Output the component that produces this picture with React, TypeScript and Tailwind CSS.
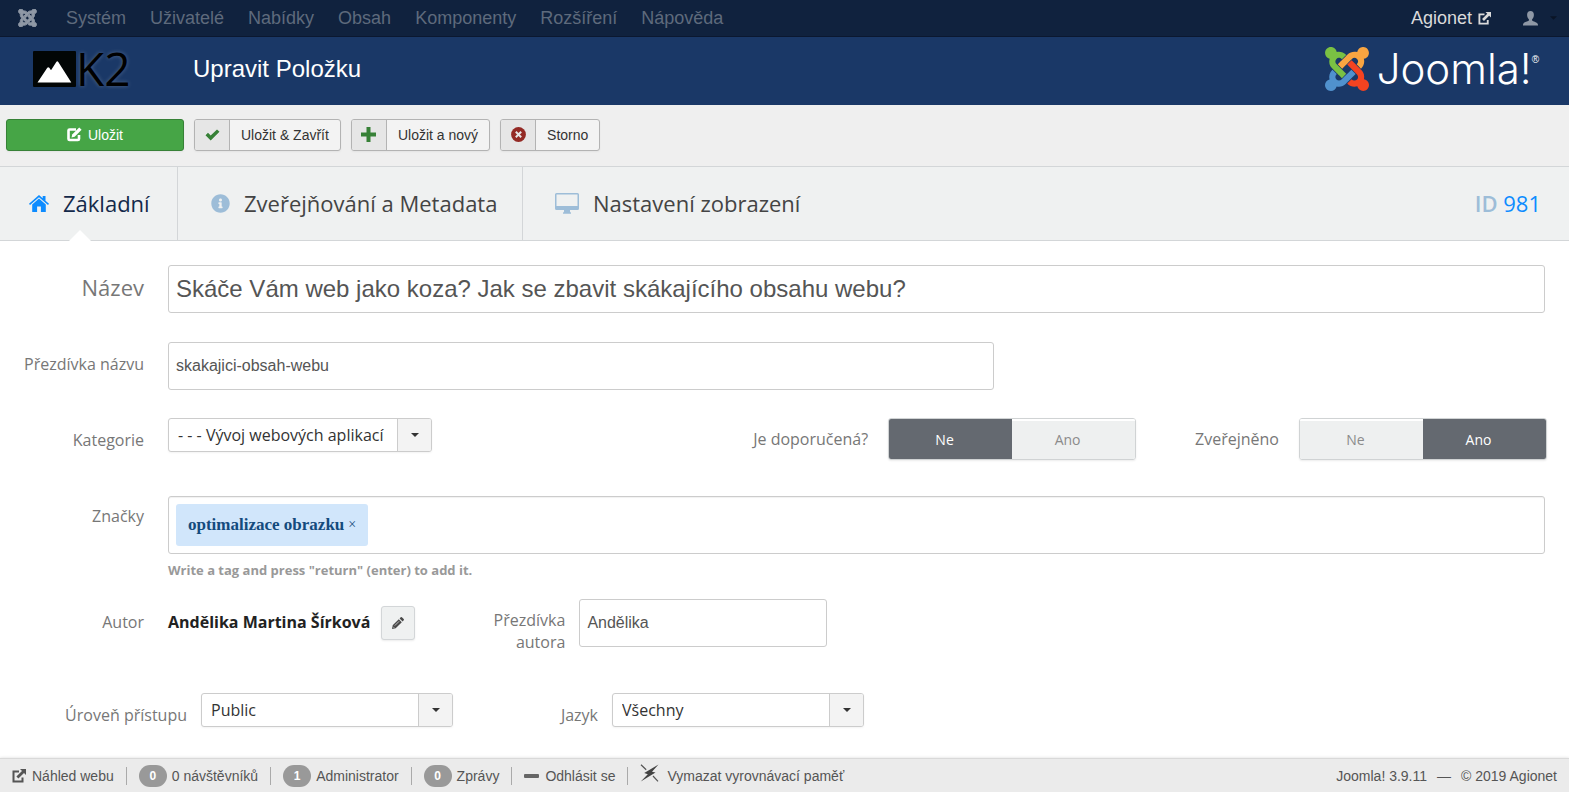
import { useState, type ReactNode } from "react";
import { FaInfoCircle } from "react-icons/fa";

const menuItems = ["Systém", "Uživatelé", "Nabídky", "Obsah", "Komponenty", "Rozšíření", "Nápověda"];

const JOOMLA_ARMS = [
  {
    color: "#7ac143",
    d: "M.6 92.1C.6 58.8 27.4 32 60.4 32c30 0 54.5 21.9 59.2 50.2 32.6-7.6 67.1.6 96.5 30l-44.3 44.3c-20.5-20.5-42.6-16.3-55.4-3.5-14.3 14.3-14.3 37.9 0 52.2l99.5 99.5-44 44.3c-87.7-87.2-49.7-49.7-99.8-99.7-26.8-26.5-35-64.8-24.8-98.9C20.4 144.6.6 120.7.6 92.1z",
  },
  {
    color: "#f9a541",
    d: "M130.1 208.5l44.3 44.3c10-10 89.7-89.7 99.7-99.8 14.3-14.3 37.6-14.3 51.9 0 12.8 12.8 17 35-3.5 55.4l44 44.3c31.2-31.2 38.5-67.6 28.9-101.2 29.2-4.1 51.9-29.2 51.9-59.5 0-33.2-26.8-60.1-59.8-60.1-30.3 0-55.4 22.5-59.5 51.6-33.8-9.9-71.7-1.5-98.3 25.1-18.3 19.1-71.1 71.5-99.6 99.9z",
  },
  {
    color: "#f44321",
    d: "M396.4 360.7c8.2-32.7-.9-68.5-26.3-93.9-11.8-12.2 5 4.7-99.5-99.7l-44.3 44.3 99.7 99.7c14.3 14.3 14.3 37.6 0 51.9-12.8 12.8-35 17-55.4-3.5l-44 44.3c27.6 30.2 68 38.8 102.7 28 5.5 27.4 29.7 48.1 58.9 48.1 33 0 59.8-26.8 59.8-60.1 0-30.2-22.5-55-51.6-59.1z",
  },
  {
    color: "#5091cd",
    d: "M312.1 307.6l-44-44.3c-87 86.4-50.4 50.4-99.7 99.8-14.3 14.3-37.6 14.3-51.9 0-13.1-13.4-16.9-35.3 3.2-55.4l-44-44.3c-30.2 30.2-38 65.2-29.5 98.3-26.7 6-46.2 29.9-46.2 58.2C0 453.2 26.8 480 59.8 480c28.6 0 52.5-19.8 58.6-46.7 32.7 8.2 68.5-.6 94.2-26 32.1-32 12.2-12.4 99.5-99.7z",
  },
];

function JoomlaMark({ className, mono }: { className: string; mono?: boolean }) {
  return (
    <svg className={className} viewBox="0 32 448 448" aria-hidden="true">
      {JOOMLA_ARMS.map((arm) => (
        <path
          key={arm.color}
          d={arm.d}
          fill={mono ? "currentColor" : arm.color}
          stroke={mono ? "currentColor" : "none"}
          strokeWidth={mono ? 24 : 0}
        />
      ))}
    </svg>
  );
}

function ExternalIcon({ className }: { className: string }) {
  return (
    <svg className={className} viewBox="0 0 14 14" aria-hidden="true">
      <path d="M7 2.5H1.5v10h9V8.5" fill="none" stroke="currentColor" strokeWidth="2" />
      <path d="M8 0h6v6l-2-2-5.6 5.6-2-2L10 2z" fill="currentColor" />
    </svg>
  );
}

function EditIcon() {
  return (
    <svg className="size-[15px]" viewBox="0 0 15 15" aria-hidden="true">
      <path d="M9 2.500H2.600Q1.500 2.500 1.500 3.600v8.300Q1.500 13 2.600 13h8.300q1.100 0 1.100-1.100V8" fill="none" stroke="currentColor" strokeWidth="2.600" />
      <path d="M4.500 10.600l.7-3.200 7-7 2.400 2.400-7 7z" fill="currentColor" />
    </svg>
  );
}

function CheckIcon() {
  return (
    <svg className="h-3 w-[15px]" viewBox="0 0 15 12" aria-hidden="true">
      <path d="M.5 6.2L3 3.800l2.700 2.700L12 .4l2.500 2.400L5.700 11.600z" fill="#378137" />
    </svg>
  );
}

function PlusIcon() {
  return (
    <svg className="size-[15px]" viewBox="0 0 15 15" aria-hidden="true">
      <path d="M5.500 0h4v5.500H15v4H9.500V15h-4V9.500H0v-4h5.500z" fill="#378137" />
    </svg>
  );
}

function CancelIcon() {
  return (
    <svg className="size-[15px]" viewBox="0 0 15 15" aria-hidden="true">
      <circle cx="7.5" cy="7.5" r="7.4" fill="#942a25" />
      <path d="M4.800 4.800l5.400 5.400M10.200 4.800l-5.400 5.400" stroke="#e6e6e6" strokeWidth="2" />
    </svg>
  );
}

function HomeIcon() {
  return (
    <svg className="h-[17px] w-5" viewBox="0 0 20 17" aria-hidden="true">
      <path d="M10 0l3.700 3.200V1h2.800v4.700L20 8.800l-1 1.200-9-7.800L1 10 0 8.800z" fill="#0d8cff" />
      <path d="M10 3.500l6.800 5.900V17h-4.900v-5.400H8.100V17H3.200V9.400z" fill="#0d8cff" />
    </svg>
  );
}

function DesktopIcon() {
  return (
    <svg className="h-[21px] w-6" viewBox="0 0 24 21" aria-hidden="true">
      <path
        fillRule="evenodd"
        d="M1.500 0h21Q24 0 24 1.500v14q0 1.500-1.500 1.500H15v1.500q0 .8 1 1v1.200H8v-1.200q1-.2 1-1V17H1.500Q0 17 0 15.500v-14Q0 0 1.500 0zM1.500 1.500v11.500h21V1.500z"
        fill="#9dbdd8"
      />
    </svg>
  );
}

function PencilIcon() {
  return (
    <svg className="size-3" viewBox="0 0 12 12" aria-hidden="true">
      <path d="M0 12l.7-3.700L6.800 2.200l3 3-6.100 6.100zM7.600 1.400L8.700.3q.6-.5 1.200 0l1.800 1.800q.5.6 0 1.200l-1.100 1.100z" fill="#4a4a4a" />
      <path d="M2.800 8.600l4.300-4.300M1.200 9.800l1 1" stroke="#efefef" strokeWidth=".7" />
    </svg>
  );
}

function UserIcon() {
  return (
    <svg className="size-[15px]" viewBox="0 0 15 15" aria-hidden="true">
      <path
        d="M7.500 0c2.200 0 3.400 1.600 3.400 3.800 0 1.900-.8 3.600-1.800 4.500v1.200c.5 1 5.700 1.300 5.900 4.300v.7H0v-.7c.2-3 5.400-3.300 5.900-4.300V8.300c-1-.9-1.800-2.600-1.800-4.500C4.100 1.600 5.300 0 7.500 0z"
        fill="currentColor"
      />
    </svg>
  );
}

function BoltIcon() {
  return (
    <svg className="mb-1.5 h-[18px] w-[19px]" viewBox="0 0 19 18" aria-hidden="true">
      <path d="M18.500.5L12 7.800l3.500.8L.8 17.500l7-7.300-3.600-1.100z" fill="#444" />
      <path d="M1 .8l5.200 5M13 12l5 5.300" stroke="#555" strokeWidth="1.200" />
    </svg>
  );
}

function Caret({ className }: { className: string }) {
  return (
    <svg className={className} viewBox="0 0 8 4" aria-hidden="true">
      <path d="M0 0h8L4 4z" fill="currentColor" />
    </svg>
  );
}

function ToolbarButton({ icon, label }: { icon: ReactNode; label: string }) {
  return (
    <button
      type="button"
      className="flex h-8 items-stretch overflow-hidden rounded-[3px] border border-[#b3b3b3] bg-[#f3f3f3] text-sm text-[#333] shadow-[0_1px_2px_rgba(0,0,0,0.05)]"
    >
      <span className="flex w-[35px] items-center justify-center border-r border-[#b3b3b3] bg-[#e6e6e6]">{icon}</span>
      <span className="self-center px-[11px]">{label}</span>
    </button>
  );
}

function SelectBox({ id, value, className }: { id: string; value: string; className: string }) {
  return (
    <div className={`relative ${className}`}>
      <select
        id={id}
        defaultValue={value}
        className="h-[34px] w-full appearance-none rounded-[3px] border border-[#ccc] bg-white pr-9 pl-[9px] text-base text-[#333] shadow-[0_1px_2px_rgba(0,0,0,0.05)]"
      >
        <option>{value}</option>
      </select>
      <span className="pointer-events-none absolute inset-y-px right-px flex w-[34px] items-center justify-center rounded-r-[2px] border-l border-[#ccc] bg-[#f3f3f3] text-[#333]">
        <Caret className="h-1 w-2" />
      </span>
    </div>
  );
}

function YesNo({ name, initial }: { name: string; initial: string }) {
  const [value, setValue] = useState(initial);
  return (
    <div
      role="radiogroup"
      aria-label={name}
      className="flex h-[42px] w-[248px] overflow-hidden rounded-[3px] border border-[#d0d3d4] text-sm shadow-[0_1px_2px_rgba(0,0,0,0.08)]"
    >
      {["Ne", "Ano"].map((option) => (
        <label
          key={option}
          className={`relative flex flex-1 items-center justify-center pr-3 ${
            value === option ? "bg-[#646970] pt-0.5 text-white" : "border-t-2 border-white bg-[#eef0f0] text-[#8b8b8b]"
          }`}
        >
          <input
            type="radio"
            name={name}
            className="sr-only"
            checked={value === option}
            onChange={() => setValue(option)}
          />
          {option}
        </label>
      ))}
    </div>
  );
}

function FooterBadge({ count, label }: { count: number; label: string }) {
  return (
    <a href="#" className="flex items-center gap-[5px]">
      <span className="flex h-[22px] w-7 items-center justify-center rounded-full bg-[#999] text-xs font-bold text-white">
        {count}
      </span>
      {label}
    </a>
  );
}

function Divider() {
  return <span className="h-[18px] w-px bg-[#aaa]" />;
}

const labelClass = "w-36 shrink-0 text-right text-[#777]";
const inputClass = "h-12 rounded-[3px] border border-[#ccc] bg-white px-[7px] text-[#555]";

export default function App() {
  return (
    <div className="flex min-h-screen flex-col bg-white font-['Liberation_Sans',Arial,sans-serif]">
      <nav className="flex h-[37px] items-center border-b border-[#0b1830] bg-[#10223e] pr-3 pl-[18px] text-lg text-[#5e6a7c]">
        <JoomlaMark className="mr-[29px] h-[18px] w-[19px] text-[#8f98a5]" mono />
        <div className="flex gap-6">
          {menuItems.map((item) => (
            <a key={item} href="#">
              {item}
            </a>
          ))}
        </div>
        <a href="#" className="ml-auto flex items-center gap-1.5 text-[#dadada]">
          Agionet
          <ExternalIcon className="size-[13px]" />
        </a>
        <button type="button" aria-label="Uživatel" className="ml-8 flex items-center gap-3 text-[#8f98a5]">
          <UserIcon />
          <Caret className="h-1 w-[7px] text-[#0a1426]" />
        </button>
      </nav>

      <header className="flex h-[68px] items-center bg-[#1a3867] pr-[30px] pb-1 pl-[33px]">
        <div className="flex w-40 items-center font-['Open_Sans',sans-serif] text-black">
          <svg className="h-9 w-[43px]" viewBox="0 0 43 36" aria-hidden="true">
            <rect width="43" height="36" rx="1" fill="#020606" />
            <path d="M4.500 31.500l9.800-14.700q1-1.300 2 0l1.700 2.500 5.300-8.300q1-1.400 2 0l13 20.500z" fill="#fff" />
          </svg>
          <span className="pb-0.5 text-[46px] leading-none [text-shadow:0_0_4px_rgba(255,255,255,0.25)]">K2</span>
        </div>
        <h1 className="text-2xl text-white">Upravit Položku</h1>
        <div className="ml-auto flex items-center">
          <JoomlaMark className="mr-2 size-11" />
          <span className="font-['Inter',sans-serif] text-[42px] leading-none font-light text-white">Joomla!</span>
          <span className="mb-5 text-[10px] text-white">®</span>
        </div>
      </header>

      <div className="flex h-[61px] items-center bg-[#efefef] px-1.5 pb-0.5">
        <button
          type="button"
          className="mr-2.5 flex h-8 w-[178px] items-center justify-center gap-1.5 rounded-[3px] border border-[#378137] bg-[#46a546] text-sm text-white shadow-[0_1px_2px_rgba(0,0,0,0.05)]"
        >
          <EditIcon />
          Uložit
        </button>
        <div className="flex gap-2.5">
          <ToolbarButton icon={<CheckIcon />} label="Uložit & Zavřít" />
          <ToolbarButton icon={<PlusIcon />} label="Uložit a nový" />
          <ToolbarButton icon={<CancelIcon />} label="Storno" />
        </div>
      </div>

      <div className="flex h-[75px] items-stretch border-y border-[#d3d6d8] bg-[#eff1f1] font-['Open_Sans',sans-serif] text-[22px] text-[#444]">
        <a href="#" className="relative flex w-[178px] items-center gap-3.5 border-r border-[#d3d6d8] pl-[29px] text-[#13294a]">
          <HomeIcon />
          Základní
          <svg className="absolute -bottom-px left-[69px] h-[11px] w-[22px]" viewBox="0 0 22 11" aria-hidden="true">
            <path d="M0 11L11 0l11 11z" fill="#fff" />
          </svg>
        </a>
        <a href="#" className="flex w-[345px] items-center gap-3.5 border-r border-[#d3d6d8] pl-[33px]">
          <FaInfoCircle className="size-[19px] text-[#9dbdd8]" />
          Zveřejňování a Metadata
        </a>
        <a href="#" className="flex items-center gap-3.5 pl-8">
          <DesktopIcon />
          Nastavení zobrazení
        </a>
        <p className="ml-auto self-center pr-7 text-[#0d8cff]">
          <span className="font-semibold text-[#9dbdd8]">ID</span> 981
        </p>
      </div>

      <form className="flex-1 pt-6 pr-6 pb-[30px] font-['Open_Sans',sans-serif] text-base">
        <div className="flex items-center gap-6">
          <label htmlFor="title" className={`${labelClass} pb-1 text-[22px]`}>
            Název
          </label>
          <input
            id="title"
            defaultValue="Skáče Vám web jako koza? Jak se zbavit skákajícího obsahu webu?"
            className={`${inputClass} flex-1 font-['Liberation_Sans',Arial,sans-serif] text-2xl`}
          />
        </div>

        <div className="mt-[29px] flex items-center gap-6">
          <label htmlFor="alias" className={`${labelClass} pb-1`}>
            Přezdívka názvu
          </label>
          <div className="flex-1">
            <input
              id="alias"
              defaultValue="skakajici-obsah-webu"
              className={`${inputClass} w-3/5 font-['Liberation_Sans',Arial,sans-serif] text-base`}
            />
          </div>
        </div>

        <div className="-mr-0.5 mt-7 flex items-start">
          <label htmlFor="category" className={`${labelClass} mr-6 pt-2.5`}>
            Kategorie
          </label>
          <SelectBox id="category" value="- - - Vývoj webových aplikací" className="w-[264px]" />
          <div className="ml-auto flex items-center gap-5">
            <span className="text-[#777]">Je doporučená?</span>
            <YesNo name="Je doporučená?" initial="Ne" />
          </div>
          <div className="ml-[59px] flex items-center gap-5">
            <span className="text-[#777]">Zveřejněno</span>
            <YesNo name="Zveřejněno" initial="Ano" />
          </div>
        </div>

        <div className="mt-9 flex items-start gap-6">
          <label htmlFor="tags" className={`${labelClass} pt-2`}>
            Značky
          </label>
          <div className="flex-1">
            <div className="flex h-[58px] items-center gap-2 rounded-[3px] border border-[#ccc] px-[7px] shadow-[inset_0_1px_1px_rgba(0,0,0,0.06)]">
              <span className="flex h-[42px] items-center gap-1 rounded-[3px] bg-[#d1e6fb] px-3 font-['Liberation_Serif',serif] text-[17px] font-bold text-[#144b7d]">
                optimalizace obrazku
                <button type="button" aria-label="Odebrat" className="text-sm font-normal">
                  ×
                </button>
              </span>
              <input id="tags" className="h-10 flex-1 outline-none" />
            </div>
            <p className="mt-[7px] text-[13px] leading-[18px] font-bold text-[#999]">
              Write a tag and press "return" (enter) to add it.
            </p>
          </div>
        </div>

        <div className="mt-5 flex items-start">
          <div className="flex h-12 items-center">
            <span className={`${labelClass} mr-6 pb-0.5`}>Autor</span>
            <b className="pb-0.5 text-[#222]">Andělika Martina Šírková</b>
            <button
              type="button"
              aria-label="Upravit autora"
              className="ml-[11px] flex size-[34px] items-center justify-center rounded-[3px] border border-[#d3d6d8] bg-[#eff1f1] shadow-[0_1px_2px_rgba(0,0,0,0.08)]"
            >
              <PencilIcon />
            </button>
          </div>
          <label htmlFor="author-alias" className="ml-[70px] w-20 pt-2.5 text-right leading-[22px] text-[#777]">
            Přezdívka autora
          </label>
          <input
            id="author-alias"
            defaultValue="Andělika"
            className={`${inputClass} ml-3.5 w-[248px] font-['Liberation_Sans',Arial,sans-serif] text-base`}
          />
        </div>

        <div className="mt-10 flex items-start">
          <label htmlFor="access" className="w-[187px] pt-2.5 text-right text-[#777]">
            Úroveň přístupu
          </label>
          <SelectBox id="access" value="Public" className="ml-3.5 w-[252px]" />
          <label htmlFor="language" className="w-[145px] pt-2.5 text-right text-[#777]">
            Jazyk
          </label>
          <SelectBox id="language" value="Všechny" className="ml-3.5 w-[252px]" />
        </div>
      </form>

      <footer className="flex h-[34px] items-center gap-3 border-t border-[#d9d9d9] bg-[#ebebeb] px-3 text-sm text-[#555] shadow-[0_0_3px_rgba(0,0,0,0.15)]">
        <a href="#" className="flex items-center gap-1.5">
          <ExternalIcon className="size-3.5" />
          Náhled webu
        </a>
        <Divider />
        <FooterBadge count={0} label="0 návštěvníků" />
        <Divider />
        <FooterBadge count={1} label="Administrator" />
        <Divider />
        <FooterBadge count={0} label="Zprávy" />
        <Divider />
        <a href="#" className="flex items-center gap-1.5">
          <span className="h-1 w-[15px] rounded-[1px] bg-[#666]" />
          Odhlásit se
        </a>
        <Divider />
        <a href="#" className="flex items-center gap-2">
          <BoltIcon />
          Vymazat vyrovnávací paměť
        </a>
        <p className="ml-auto flex gap-2.5">
          <span>Joomla! 3.9.11</span>
          <span>—</span>
          <span>© 2019 Agionet</span>
        </p>
      </footer>
    </div>
  );
}
